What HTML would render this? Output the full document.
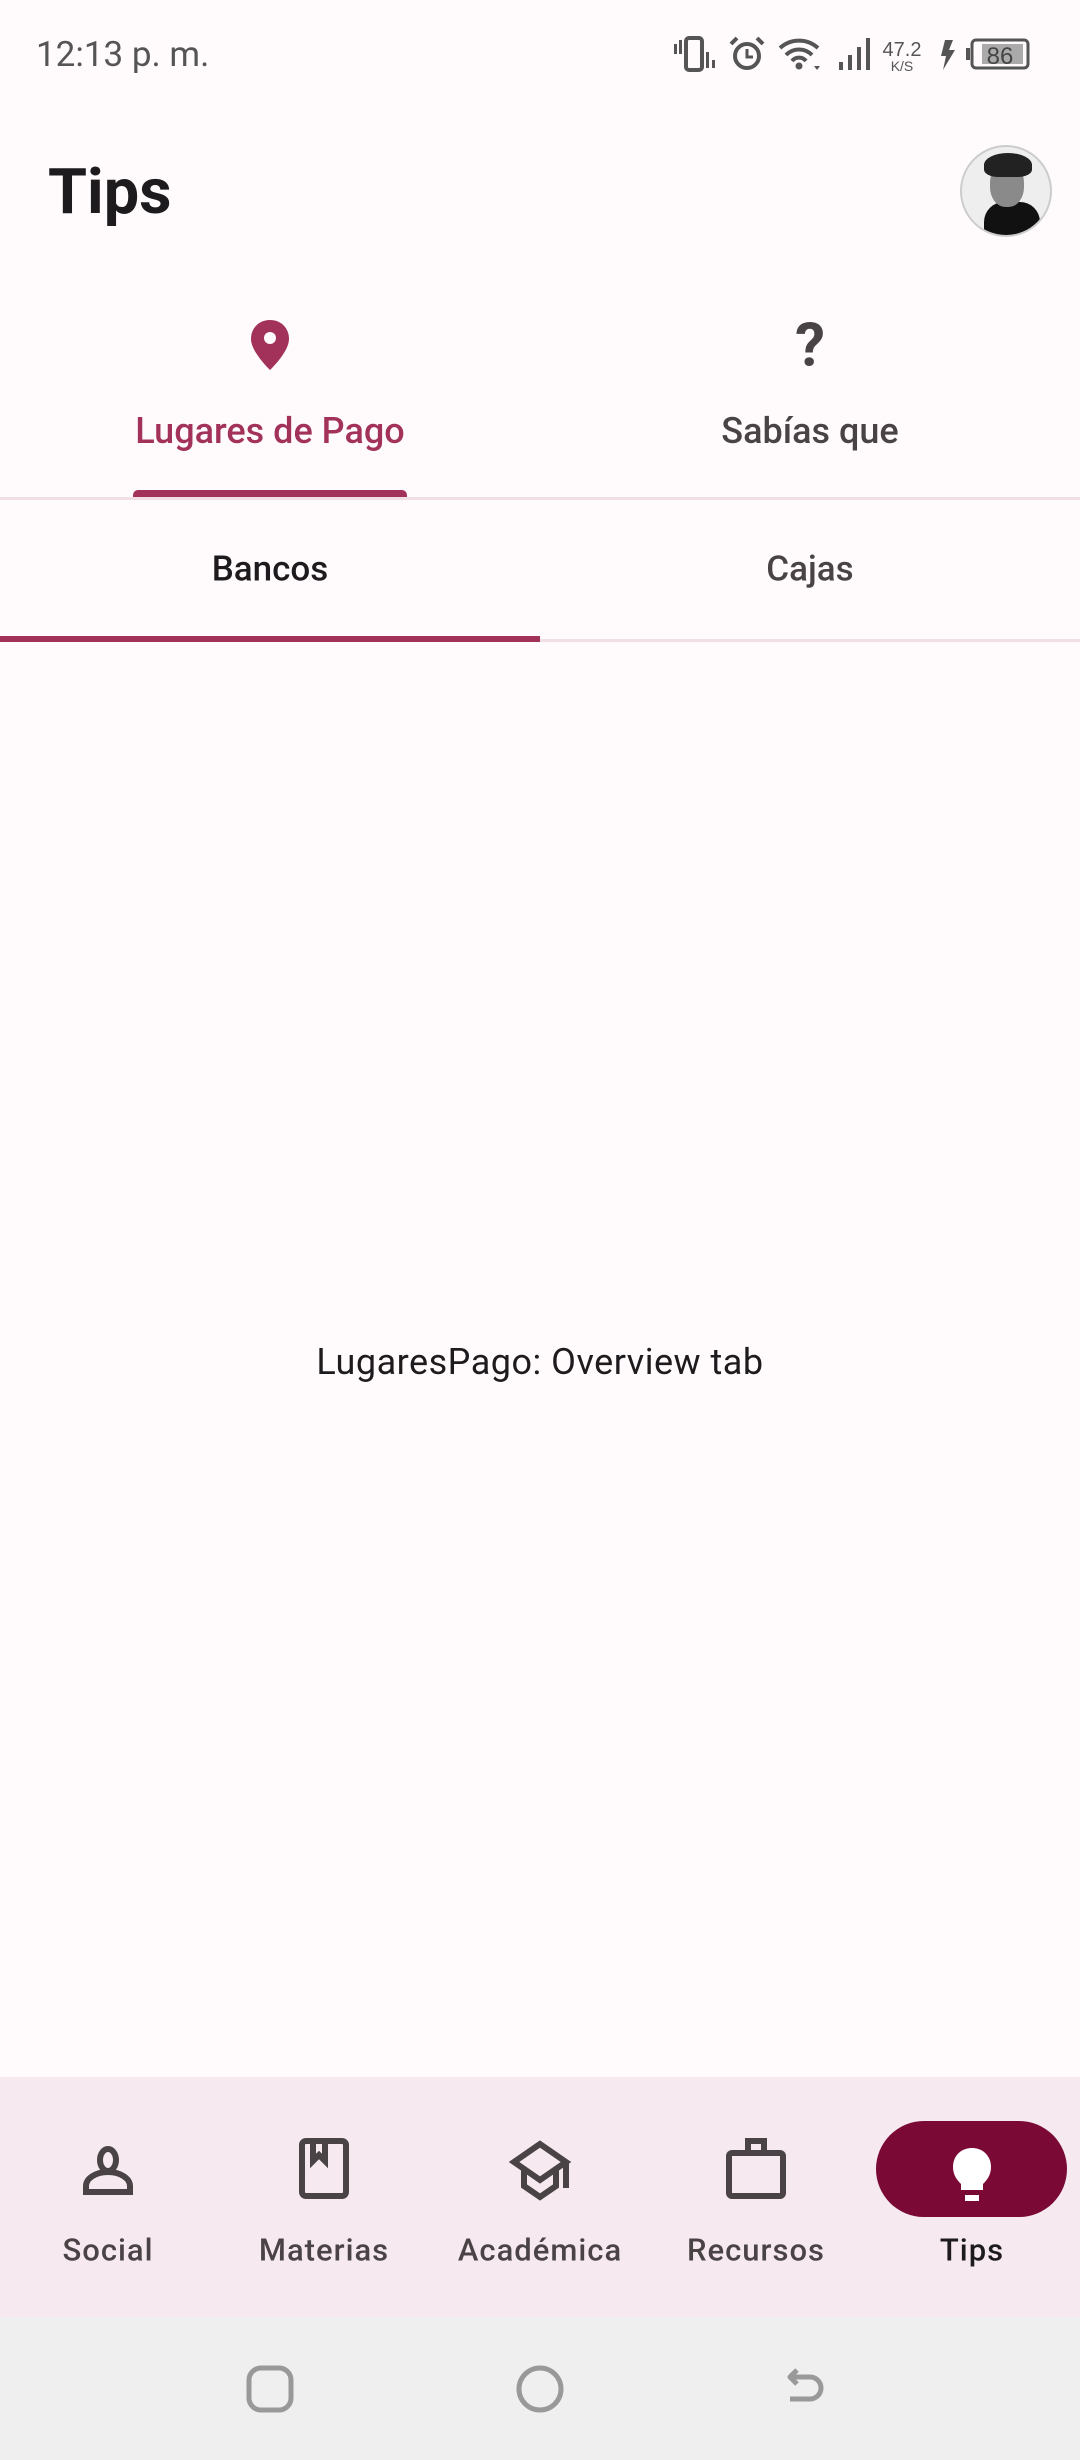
<!DOCTYPE html>
<html><head><meta charset="utf-8"><style>
*{margin:0;padding:0;box-sizing:border-box}
body{width:1080px;height:2460px;background:#fffbfd;font-family:"Roboto","Liberation Sans",sans-serif;position:relative;overflow:hidden;color:#1d1b1e}
.a{position:absolute}
.t{position:absolute;transform:translate(-50%,-50%);white-space:nowrap}
</style></head><body>
<div class="a" style="left:36px;top:34px;font-size:35px;color:#555;">12:13 p. m.</div>
<svg class="a" style="left:670px;top:34px" width="370" height="40" viewBox="670 34 370 40">
 <g fill="#555">
  <rect x="686" y="38" width="16" height="32" rx="3" fill="none" stroke="#555" stroke-width="4"/>
  <rect x="674" y="44" width="3" height="10"/><rect x="679" y="40" width="3" height="14"/>
  <rect x="706" y="52" width="3" height="16"/><rect x="712" y="60" width="3" height="8"/>
  <circle cx="747" cy="56" r="12" fill="none" stroke="#555" stroke-width="4"/>
  <path d="M747 49v8h6" fill="none" stroke="#555" stroke-width="3"/>
  <path d="M731 44l6-6M763 44l-6-6" stroke="#555" stroke-width="4"/>
  <path d="M780 48a28 28 0 0 1 38 0M786 55a18 18 0 0 1 26 0M792 61a9 9 0 0 1 14 0" fill="none" stroke="#555" stroke-width="4"/>
  <circle cx="799" cy="66" r="3.5"/><path d="M814 66h6l-3 4z"/>
  <rect x="839" y="62" width="4" height="8"/><rect x="848" y="55" width="4" height="15"/><rect x="857" y="47" width="4" height="23"/><rect x="866" y="38" width="4" height="32"/>
  <path d="M945 40h8l-4 10h6l-12 20 3-14h-5z"/>
  <rect x="966" y="48" width="4" height="12"/>
  <rect x="972" y="40" width="56" height="28" rx="4" fill="none" stroke="#555" stroke-width="3"/>
  <rect x="982" y="44" width="41" height="20" fill="#aaa"/>
 </g>
 <text x="902" y="56" font-size="20" text-anchor="middle" fill="#555" font-family="Liberation Sans">47.2</text>
 <text x="902" y="71" font-size="14" text-anchor="middle" fill="#555" font-family="Liberation Sans">K/S</text>
 <text x="1000" y="64" font-size="24" text-anchor="middle" fill="#444" font-family="Liberation Sans">86</text>
</svg>

<div class="a" style="left:48px;top:158px;font-size:63px;font-weight:bold;line-height:70px">Tips</div>
<div class="a" style="left:960px;top:145px;width:92px;height:92px;border-radius:50%;border:2px solid #ccc;background:#eee;overflow:hidden">
 <div class="a" style="left:22px;top:55px;width:56px;height:40px;background:#111;border-radius:20px 20px 0 0"></div>
 <div class="a" style="left:28px;top:16px;width:34px;height:44px;background:#8a8a8a;border-radius:45%"></div>
 <div class="a" style="left:22px;top:6px;width:48px;height:24px;background:#222;border-radius:50% 50% 30% 30%"></div>
</div>

<svg class="a" style="left:250px;top:320px" width="40" height="50" viewBox="0 0 40 50"><path d="M20 0C9 0 1 8 1 19c0 13 19 31 19 31s19-18 19-31C39 8 31 0 20 0z" fill="#a3325a"/><circle cx="20" cy="18" r="6" fill="#fffbfd"/></svg>
<div class="t" style="left:270px;top:431px;font-size:36px;font-weight:500;color:#a3325a">Lugares de Pago</div>
<div class="t" style="left:810px;top:345px;font-size:60px;font-weight:bold;color:#4a4346">?</div>
<div class="t" style="left:810px;top:431px;font-size:36px;font-weight:500;color:#4a4346">Sabías que</div>
<div class="a" style="left:133px;top:490px;width:274px;height:8px;background:#a3325a;border-radius:5px 5px 0 0"></div>
<div class="a" style="left:0;top:497px;width:1080px;height:3px;background:#f0dfe5"></div>

<div class="t" style="left:270px;top:569px;font-size:35px;font-weight:500;color:#1d1b1e">Bancos</div>
<div class="t" style="left:810px;top:569px;font-size:35px;font-weight:500;color:#4a4346">Cajas</div>
<div class="a" style="left:0;top:639px;width:1080px;height:3px;background:#f0dfe5"></div>
<div class="a" style="left:0;top:636px;width:540px;height:6px;background:#a3325a"></div>

<div class="t" style="left:540px;top:1362px;font-size:36px;color:#1d1b1e;letter-spacing:0.5px">LugaresPago: Overview tab</div>

<div class="a" style="left:0;top:2077px;width:1080px;height:240px;background:#f6eaf0"></div>
<svg class="a" style="left:0;top:2110px" width="1080" height="120">
 <g fill="none" stroke="#4a4346" stroke-width="6">
  <ellipse cx="108" cy="50" rx="8" ry="11"/>
  <path d="M86 82v-6a22 14 0 0 1 44 0v6z"/>
  <rect x="302" y="31" width="44" height="55" rx="4"/>
  <path d="M313 31v20l6-6 6 6V31"/>
  <path d="M540 34L514 52 540 70 566 52Z M524 60v16l16 11 16-11V60 M566 52v26"/>
  <path d="M732 43h48a3 3 0 0 1 3 3v37a3 3 0 0 1-3 3h-48a3 3 0 0 1-3-3V46a3 3 0 0 1 3-3zM748 43v-12h16v12"/>
 </g>
 <rect x="876" y="11" width="191" height="96" rx="48" fill="#7a0a35"/>
 <path d="M972 38c-11 0-19 8-19 19 0 8 4 13 8 17v6h22v-6c4-4 8-9 8-17 0-11-8-19-19-19z" fill="#fff"/>
 <rect x="965" y="85" width="14" height="6" fill="#fff"/>
</svg>
<div class="t" style="left:108px;top:2250px;font-size:31px;font-weight:500;color:#4a4346;letter-spacing:1px">Social</div>
<div class="t" style="left:324px;top:2250px;font-size:31px;font-weight:500;color:#4a4346;letter-spacing:1px">Materias</div>
<div class="t" style="left:540px;top:2250px;font-size:31px;font-weight:500;color:#4a4346;letter-spacing:1px">Académica</div>
<div class="t" style="left:756px;top:2250px;font-size:31px;font-weight:500;color:#4a4346;letter-spacing:1px">Recursos</div>
<div class="t" style="left:972px;top:2250px;font-size:31px;font-weight:500;color:#1d1b1e;letter-spacing:1px">Tips</div>

<div class="a" style="left:0;top:2317px;width:1080px;height:143px;background:#efefef"></div>
<svg class="a" style="left:0;top:2360px" width="1080" height="60">
 <g fill="none" stroke="#999" stroke-width="5">
  <rect x="249" y="8" width="42" height="42" rx="12"/>
  <circle cx="540" cy="29" r="21"/>
  <path d="M797 10l-7 7 7 7M790 17h20a11 11 0 0 1 0 22h-20" stroke-linejoin="round"/>
 </g>
</svg>
</body></html>
